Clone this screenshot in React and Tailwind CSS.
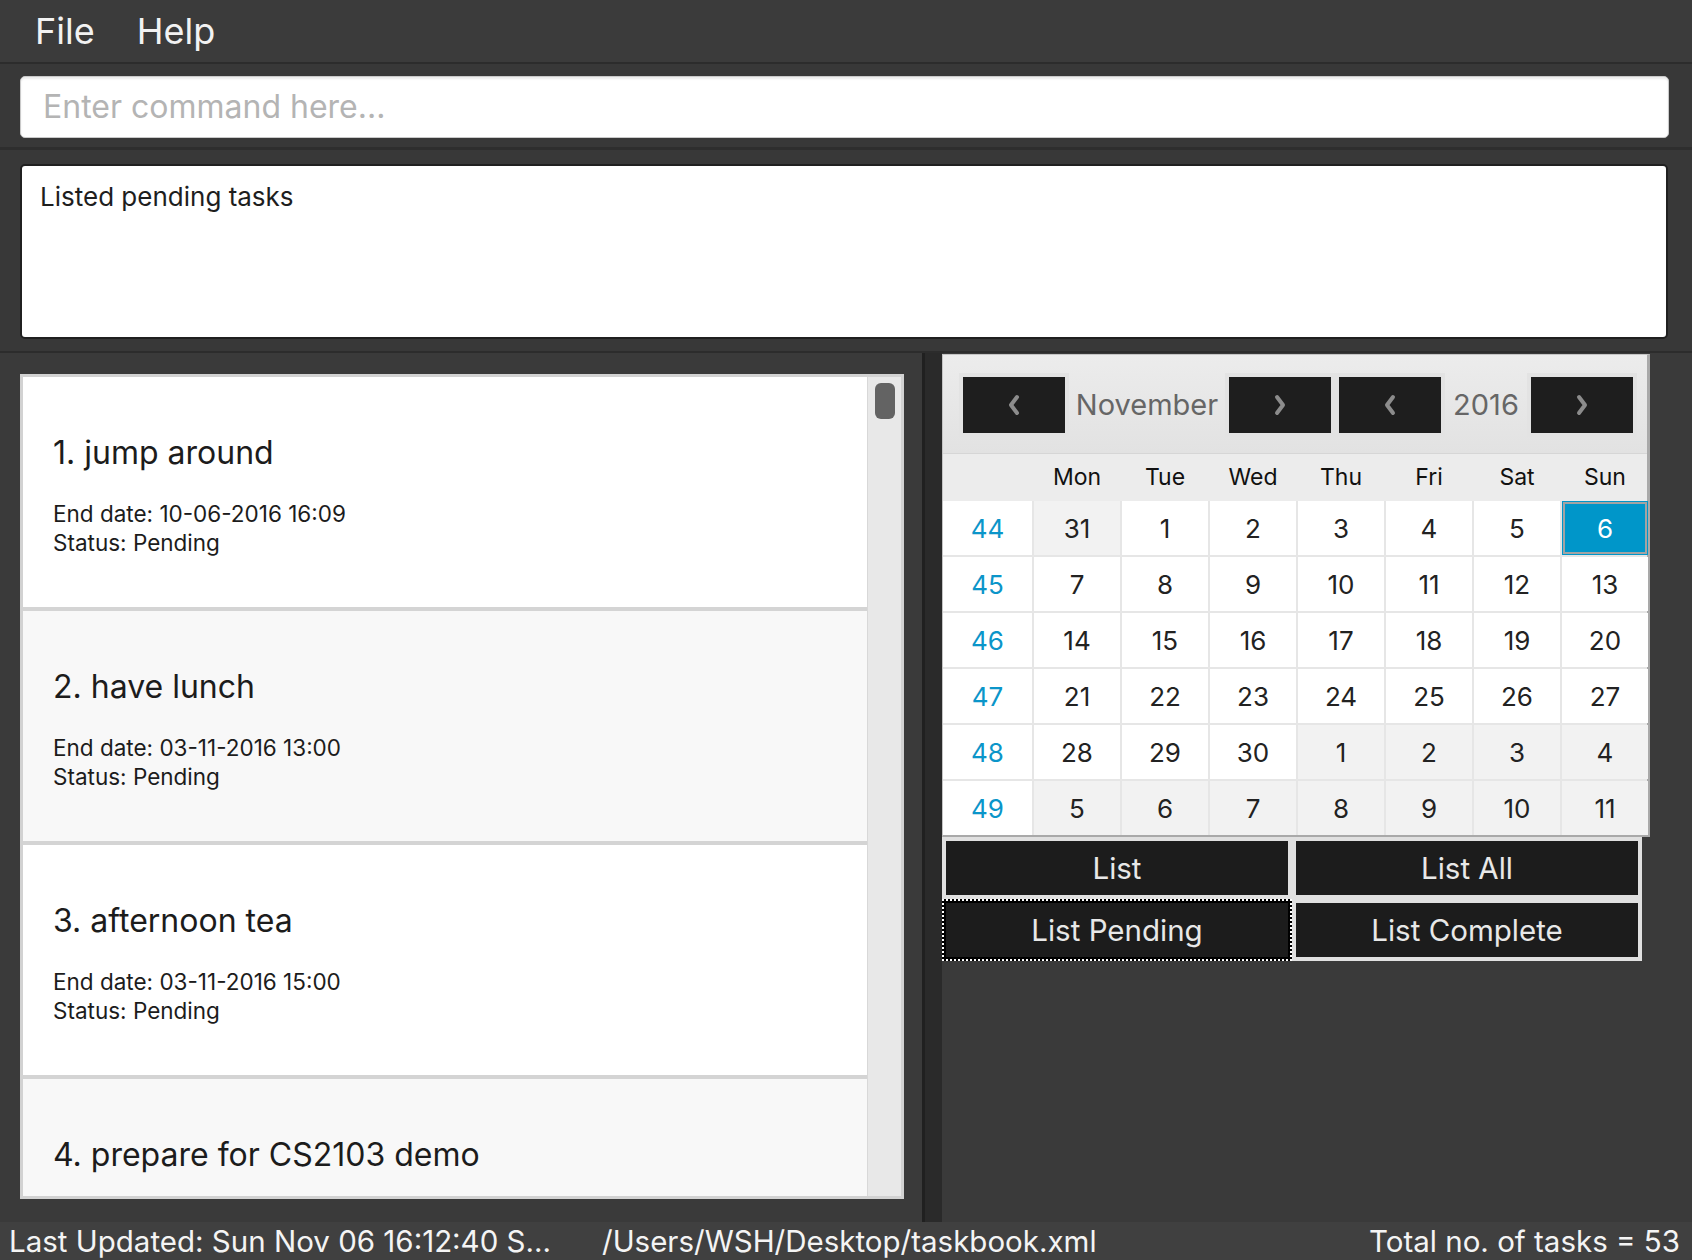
import React from "react";

const tasks = [
    {title: "1. jump around", end: "10-06-2016 16:09", bg: "bg-white"},
    {title: "2. have lunch", end: "03-11-2016 13:00", bg: "bg-[#f8f8f8]"},
    {title: "3. afternoon tea", end: "03-11-2016 15:00", bg: "bg-white"},
    {title: "4. prepare for CS2103 demo", bg: "bg-[#f8f8f8]"}
];

// each day: [label, inMonth, isToday]
const weeks = [
    {wk: 44, days: [["31", false], ["1", true], ["2", true], ["3", true], ["4", true], ["5", true], ["6", true, true]]},
    {wk: 45, days: [["7", true], ["8", true], ["9", true], ["10", true], ["11", true], ["12", true], ["13", true]]},
    {wk: 46, days: [["14", true], ["15", true], ["16", true], ["17", true], ["18", true], ["19", true], ["20", true]]},
    {wk: 47, days: [["21", true], ["22", true], ["23", true], ["24", true], ["25", true], ["26", true], ["27", true]]},
    {wk: 48, days: [["28", true], ["29", true], ["30", true], ["1", false], ["2", false], ["3", false], ["4", false]]},
    {wk: 49, days: [["5", false], ["6", false], ["7", false], ["8", false], ["9", false], ["10", false], ["11", false]]}
];

const dayNames = ["Mon", "Tue", "Wed", "Thu", "Fri", "Sat", "Sun"];

const Chevron = ({dir}) => (
    <svg width="16" height="24" viewBox="0 0 16 24">
        <polyline points={dir === "left" ? "11,4 5,12 11,20" : "5,4 11,12 5,20"}
            fill="none" stroke="#8c8c8c" strokeWidth="4" strokeLinecap="round" strokeLinejoin="round"/>
    </svg>
);

const NavButton = ({dir}) => (
    <div className="w-[102px] h-[56px] bg-[#1e1e1e] flex items-center justify-center shadow-[0_0_0_4px_#e3e3e3]">
        <Chevron dir={dir}/>
    </div>
);

const TaskCard = ({task}) => (
    <div className={`h-[230px] shrink-0 ${task.bg} pl-[30px] pt-[54px] text-[#1c1c1c]`}>
        <p className="text-[32px] leading-[44px]">{task.title}</p>
        {task.end && (
            <div className="mt-[24px] text-[22.5px] leading-[29px]">
                <p>End date: {task.end}</p>
                <p>Status: Pending</p>
            </div>
        )}
    </div>
);

const Calendar = () => (
    <div className="w-[708px] bg-[#e8e8e8] border border-[#c4c4c4] border-r-[3px] border-r-[#a9a9a9] border-b-[2px] border-b-[#a9a9a9]">
        {/* month / year header */}
        <div className="h-[99px] flex items-start pt-[22px] pl-[20px] bg-gradient-to-b from-[#ececec] to-[#e2e2e2] border-b border-[#d6d6d6]">
            <NavButton dir="left"/>
            <span className="w-[164px] leading-[56px] text-center text-[29px] text-[#666]">November</span>
            <NavButton dir="right"/>
            <div className="w-[8px]"/>
            <NavButton dir="left"/>
            <span className="w-[90px] leading-[56px] text-center text-[29px] text-[#666]">2016</span>
            <NavButton dir="right"/>
        </div>
        <div className="grid grid-cols-[89px_repeat(7,86px)] gap-x-[2px] h-[47px] items-center bg-[#ececec] text-[23px] text-[#111]">
            <span/>
            {dayNames.map((d) => (
                <span key={d} className="text-center">{d}</span>
            ))}
        </div>
        <div className="grid grid-cols-[89px_repeat(7,86px)] auto-rows-[54px] gap-[2px] bg-[#e6e6e6] text-[26px]">
            {weeks.map((w) => (
                <React.Fragment key={w.wk}>
                    <div className="bg-white flex items-center justify-center text-[#0b95c9]">{w.wk}</div>
                    {w.days.map(([label, inMonth, today], i) => (
                        today ? (
                            <div key={i} className="bg-[#0096c9] flex items-center justify-center text-white shadow-[inset_0_0_0_1px_#0096c9,inset_0_0_0_3px_#a3a3a3]">
                                {label}
                            </div>
                        ) : (
                            <div key={i} className={`${inMonth ? "bg-white" : "bg-[#f2f2f2]"} flex items-center justify-center text-[#222]`}>
                                {label}
                            </div>
                        )
                    ))}
                </React.Fragment>
            ))}
        </div>
    </div>
);

const ListButton = ({children, focused}) => (
    <button className={`h-[54px] bg-[#1c1c1c] text-[#e8e8e8] text-[29.5px] ${focused ? "outline-2 outline-dotted outline-white outline-offset-[2px] shadow-[0_0_0_4px_#000]" : ""}`}>
        {children}
    </button>
);

export default function App() {
    return (
        <div className="w-[1692px] h-[1260px] bg-[#3a3a3a] flex flex-col overflow-hidden font-['Inter',sans-serif]">
            {/* menu bar */}
            <div className="h-[64px] shrink-0 bg-[#3b3b3b] flex items-center pl-[35px] gap-[42px] text-[36px] text-[#f2f2f2] border-b-2 border-[#2c2c2c]">
                <span>File</span>
                <span>Help</span>
            </div>

            {/* command box */}
            <div className="h-[86px] shrink-0 bg-[#383838] pl-[20px] pr-[23px] pt-[12px] border-b-[3px] border-[#2e2e2e]">
                <div className="h-[62px] bg-white rounded-[5px] border border-[#c9c9c9] shadow-[inset_0_2px_2px_rgba(0,0,0,0.08)] flex items-center pl-[22px] text-[32px] text-[#b4b4b4]">
                    Enter command here...
                </div>
            </div>

            {/* result display */}
            <div className="h-[203px] shrink-0 bg-[#383838] pl-[20px] pr-[24px] pt-[14px] border-b-2 border-[#2c2c2c]">
                <div className="h-[175px] bg-white rounded-[5px] border-2 border-[#202020] pl-[18px] pt-[11px] text-[26px] text-[#1e1e1e]">
                    Listed pending tasks
                </div>
            </div>

            {/* main area */}
            <div className="flex-1 flex min-h-0">
                <div className="w-[922px] shrink-0 pl-[20px] pr-[18px] pt-[21px] pb-[23px]">
                    <div className="h-full flex border-[3px] border-[#d2d2d2] bg-[#d4d4d4]">
                        <div className="flex-1 flex flex-col gap-[4px] overflow-hidden">
                            {tasks.map((t) => (
                                <TaskCard key={t.title} task={t}/>
                            ))}
                        </div>
                        <div className="w-[34px] shrink-0 bg-[#e8e8e8] border-l border-[#d8d8d8] flex justify-center pt-[6px]">
                            <div className="w-[20px] h-[36px] rounded-[6px] bg-[#636363]"/>
                        </div>
                    </div>
                </div>

                {/* split pane divider */}
                <div className="w-[20px] shrink-0 bg-[#2a2a2a] border-l-[3px] border-[#202020]"/>

                <div className="flex-1 pt-[1px]">
                    <Calendar/>
                    <div className="w-[700px] bg-[#e0e0e0] p-[4px] grid grid-cols-2 gap-[8px]">
                        <ListButton>List</ListButton>
                        <ListButton>List All</ListButton>
                        <ListButton focused>List Pending</ListButton>
                        <ListButton>List Complete</ListButton>
                    </div>
                </div>
            </div>

            {/* status bar */}
            <div className="h-[38px] shrink-0 bg-[#404040] flex items-center text-[29.5px] leading-[38px] text-[#f4f4f4] whitespace-nowrap">
                <span className="w-[602px] pl-[9px]">Last Updated: Sun Nov 06 16:12:40 S...</span>
                <span>/Users/WSH/Desktop/taskbook.xml</span>
                <span className="ml-auto pr-[12px]">Total no. of tasks = 53</span>
            </div>
        </div>
    );
}
